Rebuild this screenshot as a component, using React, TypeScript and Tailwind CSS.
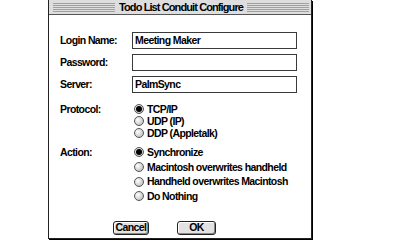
const font = { fontFamily: '"Liberation Sans", Arial, sans-serif' }

function Stripes() {
  return (
    <div className="flex-1 h-[11px] flex flex-col justify-between py-[1px]">
      {[0, 1, 2, 3, 4].map((i) => (
        <div key={i} className="h-px bg-[#a0a0a0]" />
      ))}
    </div>
  )
}

function Field({ label, value }: { label: string; value: string }) {
  return (
    <div className="flex items-center h-[17px]">
      <span className="w-[72px] font-bold">{label}</span>
      <div className="w-[165px] h-[17px] border border-[#3a3a3a] bg-white px-[2px] leading-[15px] font-bold">
        {value}
      </div>
    </div>
  )
}

function Radio({ label, on }: { label: string; on?: boolean }) {
  return (
    <div className="flex items-center gap-[3px] whitespace-nowrap">
      <span className="w-[10px] h-[10px] rounded-full border border-[#555] bg-[radial-gradient(circle_at_35%_35%,#ffffff,#b0b0b0)] flex items-center justify-center">
        {on && <span className="w-[6px] h-[6px] rounded-full bg-black" />}
      </span>
      <span className="font-bold">{label}</span>
    </div>
  )
}

function Button({ label, w }: { label: string; w: string }) {
  return (
    <div className={`${w} h-[14px] rounded-[3px] border border-[#222] bg-[#e2e2e2] shadow-[inset_-1px_-1px_0_#888,inset_1px_1px_0_#fff] flex items-center justify-center font-bold`}>
      {label}
    </div>
  )
}

export default function App() {
  return (
    <div className="w-[396px] h-[243px] bg-white pl-[48px] text-[10.5px] tracking-[-0.6px] text-black" style={font}>
      <div className="w-[264px] h-[239px] flex flex-col border-l border-r border-b border-[#222] shadow-[1px_1px_0_#000]">
        <div className="h-[15px] bg-[#dedede] border-b border-[#555] flex items-center pl-[4px] pr-[2px] gap-[4px]">
          <Stripes />
          <span className="font-bold text-[11px] tracking-[-0.9px] leading-none">Todo List Conduit Configure</span>
          <Stripes />
        </div>
        <div className="flex-1 bg-white pl-[11px] pt-[17px] flex flex-col">
          <div className="flex flex-col gap-[5px]">
            <Field label="Login Name:" value="Meeting Maker" />
            <Field label="Password:" value="" />
            <Field label="Server:" value="PalmSync" />
          </div>
          <div className="flex mt-[10px]">
            <span className="w-[74px] font-bold leading-[12px]">Protocol:</span>
            <div className="flex flex-col leading-[12px]">
              <Radio label="TCP/IP" on />
              <Radio label="UDP (IP)" />
              <Radio label="DDP (Appletalk)" />
            </div>
          </div>
          <div className="flex mt-[6px]">
            <span className="w-[74px] font-bold leading-[14.7px]">Action:</span>
            <div className="flex flex-col leading-[14.7px]">
              <Radio label="Synchronize" on />
              <Radio label="Macintosh overwrites handheld" />
              <Radio label="Handheld overwrites Macintosh" />
              <Radio label="Do Nothing" />
            </div>
          </div>
          <div className="flex mt-[17px] pl-[53px] gap-[28px]">
            <Button label="Cancel" w="w-[36px]" />
            <Button label="OK" w="w-[39px]" />
          </div>
        </div>
      </div>
    </div>
  )
}
